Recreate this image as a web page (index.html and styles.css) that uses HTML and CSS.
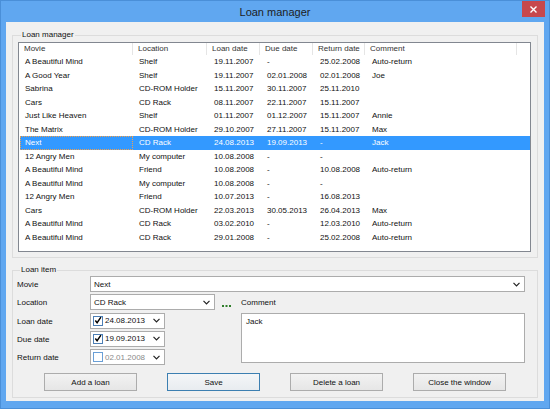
FILE: index.html
```html
<!DOCTYPE html>
<html lang="en">
<head>
  <meta charset="UTF-8">
  <title>Loan manager</title>
  <link rel="stylesheet" href="styles.css">
</head>
<body>
  <div class="window">
    <!-- Title bar -->
    <div class="titlebar">
      <span></span>
      <span class="title">Loan manager</span>
      <button class="close" title="Close">
        <svg width="7" height="7" viewBox="0 0 7 7"><path d="M0.5 0.5 L6.5 6.5 M6.5 0.5 L0.5 6.5" stroke="#fff" stroke-width="1.4"/></svg>
      </button>
    </div>

    <div class="client">
      <!-- Loan list -->
      <div class="group group-list">
        <div class="group-title">Loan manager</div>
        <div class="listview">
          <div class="lv-row lv-head">
            <span>Movie</span>
            <span>Location</span>
            <span>Loan date</span>
            <span>Due date</span>
            <span>Return date</span>
            <span>Comment</span>
            <span></span>
          </div>
          <div class="lv-row"><span>A Beautiful Mind</span><span>Shelf</span><span class="date">19.11.2007</span><span class="date">-</span><span class="date">25.02.2008</span><span class="cmt">Auto-return</span></div>
          <div class="lv-row"><span>A Good Year</span><span>Shelf</span><span class="date">19.11.2007</span><span class="date">02.01.2008</span><span class="date">02.01.2008</span><span class="cmt">Joe</span></div>
          <div class="lv-row"><span>Sabrina</span><span>CD-ROM Holder</span><span class="date">15.11.2007</span><span class="date">30.11.2007</span><span class="date">25.11.2010</span><span class="cmt"></span></div>
          <div class="lv-row"><span>Cars</span><span>CD Rack</span><span class="date">08.11.2007</span><span class="date">22.11.2007</span><span class="date">15.11.2007</span><span class="cmt"></span></div>
          <div class="lv-row"><span>Just Like Heaven</span><span>Shelf</span><span class="date">01.11.2007</span><span class="date">01.12.2007</span><span class="date">15.11.2007</span><span class="cmt">Annie</span></div>
          <div class="lv-row"><span>The Matrix</span><span>CD-ROM Holder</span><span class="date">29.10.2007</span><span class="date">27.11.2007</span><span class="date">15.11.2007</span><span class="cmt">Max</span></div>
          <div class="lv-row selected"><span class="focus">Next</span><span>CD Rack</span><span class="date">24.08.2013</span><span class="date">19.09.2013</span><span class="date">-</span><span class="cmt">Jack</span></div>
          <div class="lv-row"><span>12 Angry Men</span><span>My computer</span><span class="date">10.08.2008</span><span class="date">-</span><span class="date">-</span><span class="cmt"></span></div>
          <div class="lv-row"><span>A Beautiful Mind</span><span>Friend</span><span class="date">10.08.2008</span><span class="date">-</span><span class="date">10.08.2008</span><span class="cmt">Auto-return</span></div>
          <div class="lv-row"><span>A Beautiful Mind</span><span>My computer</span><span class="date">10.08.2008</span><span class="date">-</span><span class="date">-</span><span class="cmt"></span></div>
          <div class="lv-row"><span>12 Angry Men</span><span>Friend</span><span class="date">10.07.2013</span><span class="date">-</span><span class="date">16.08.2013</span><span class="cmt"></span></div>
          <div class="lv-row"><span>Cars</span><span>CD-ROM Holder</span><span class="date">22.03.2013</span><span class="date">30.05.2013</span><span class="date">26.04.2013</span><span class="cmt">Max</span></div>
          <div class="lv-row"><span>A Beautiful Mind</span><span>CD Rack</span><span class="date">03.02.2010</span><span class="date">-</span><span class="date">12.03.2010</span><span class="cmt">Auto-return</span></div>
          <div class="lv-row"><span>A Beautiful Mind</span><span>CD Rack</span><span class="date">29.01.2008</span><span class="date">-</span><span class="date">25.02.2008</span><span class="cmt">Auto-return</span></div>
        </div>
      </div>

      <!-- Loan item editor -->
      <div class="group group-item">
        <div class="group-title">Loan item</div>
        <div class="form">
          <label class="lbl">Movie</label>
          <div class="combo wide">
            <span>Next</span>
            <svg class="arrow" width="7" height="5" viewBox="0 0 7 5"><path d="M0.5 0.8 L3.5 3.8 L6.5 0.8" fill="none" stroke="#222" stroke-width="1.2"/></svg>
          </div>

          <label class="lbl">Location</label>
          <div class="combo">
            <span>CD Rack</span>
            <svg class="arrow" width="7" height="5" viewBox="0 0 7 5"><path d="M0.5 0.8 L3.5 3.8 L6.5 0.8" fill="none" stroke="#222" stroke-width="1.2"/></svg>
          </div>
          <div class="more">
            <svg width="9" height="2" viewBox="0 0 9 2"><rect x="0" y="0" width="2" height="2" fill="#2f7d2a"/><rect x="3.5" y="0" width="2" height="2" fill="#2f7d2a"/><rect x="7" y="0" width="2" height="2" fill="#2f7d2a"/></svg>
          </div>
          <label class="lbl comment-lbl">Comment</label>

          <label class="lbl">Loan date</label>
          <div class="datepick">
            <span class="check on"><svg width="9" height="9" viewBox="0 0 9 9"><path d="M1.5 4.5 L3.5 7 L7.8 0.8" fill="none" stroke="#000" stroke-width="1.6"/></svg></span>
            <span class="dtext">24.08.2013</span>
            <svg class="arrow" width="7" height="5" viewBox="0 0 7 5"><path d="M0.5 0.8 L3.5 3.8 L6.5 0.8" fill="none" stroke="#222" stroke-width="1.2"/></svg>
          </div>
          <div class="comment">Jack</div>

          <label class="lbl">Due date</label>
          <div class="datepick">
            <span class="check on"><svg width="9" height="9" viewBox="0 0 9 9"><path d="M1.5 4.5 L3.5 7 L7.8 0.8" fill="none" stroke="#000" stroke-width="1.6"/></svg></span>
            <span class="dtext">19.09.2013</span>
            <svg class="arrow" width="7" height="5" viewBox="0 0 7 5"><path d="M0.5 0.8 L3.5 3.8 L6.5 0.8" fill="none" stroke="#222" stroke-width="1.2"/></svg>
          </div>

          <label class="lbl">Return date</label>
          <div class="datepick">
            <span class="check"></span>
            <span class="dtext off">02.01.2008</span>
            <svg class="arrow" width="7" height="5" viewBox="0 0 7 5"><path d="M0.5 0.8 L3.5 3.8 L6.5 0.8" fill="none" stroke="#222" stroke-width="1.2"/></svg>
          </div>
        </div>

        <div class="buttons">
          <button>Add a loan</button>
          <button class="default">Save</button>
          <button>Delete a loan</button>
          <button>Close the window</button>
        </div>
      </div>
    </div>
  </div>
</body>
</html>
```

FILE: styles.css
```css
/* General */
body {
  margin: 0;
  font-family: "Liberation Sans", Arial, sans-serif;
  font-size: 8px;
  color: #111;
}

/* Window frame */
.window {
  width: 550px;
  height: 409px;
  box-sizing: border-box;
  border: 1px solid #4a8fd8;
  background-color: #60a7f0;
  padding: 0 5px 7px 5px;
  display: flex;
  flex-direction: column;
}

.titlebar {
  height: 21px;
  display: grid;
  grid-template-columns: 1fr auto 1fr;
  align-items: center;
}

.title {
  font-size: 11px;
  color: #1d1d1d;
  padding-top: 1px;
}

.close {
  justify-self: end;
  align-self: start;
  margin-right: -1px;
  width: 23px;
  height: 16px;
  border: none;
  padding: 0;
  background-color: #c7484d;
  display: flex;
  align-items: center;
  justify-content: center;
}

/* Client area */
.client {
  flex: 1;
  background-color: #f0f0f0;
  padding: 13px 6px 0 6px;
  display: flex;
  flex-direction: column;
}

/* Group boxes */
.group {
  border: 1px solid #dcdcdc;
  display: flex;
  flex-direction: column;
}

.group-title {
  width: fit-content;
  margin: -7px 0 0 3px;
  padding: 0 1px;
  line-height: 12px;
  height: 12px;
  background-color: #f0f0f0;
}

.group-list {
  padding: 0 6px 5px 5px;
}

.group-item {
  margin-top: 12px;
  padding: 0 12px 6px 4px;
}

/* List view */
.listview {
  margin-top: 1px;
  height: 210px;
  box-sizing: border-box;
  border: 1px solid #828790;
  background-color: #fff;
  overflow: hidden;
}

.lv-row {
  display: grid;
  grid-template-columns: 114px 74px 53px 53px 52px 152px 13px;
  height: 13.5px;
  line-height: 13.5px;
  white-space: nowrap;
}

.lv-row span {
  padding-left: 6px;
  overflow: hidden;
}

.lv-row span.date {
  padding-left: 7px;
}

.lv-row span.cmt {
  padding-left: 7px;
}

.lv-head {
  height: 12.25px;
  line-height: 12.25px;
  color: #333;
}

.lv-head span {
  padding-left: 5px;
  border-right: 1px solid #e5e5e5;
}

.lv-head span:last-child {
  border-right: none;
}

.lv-row.selected {
  background-color: #3399ff;
  color: #fff;
  margin-left: 1px;
  grid-template-columns: 113px 74px 53px 53px 52px 152px 13px;
}

.lv-row.selected span.focus {
  padding-left: 5px;
  outline: 1px dotted #f3a04a;
  outline-offset: -1px;
}

/* Loan item form */
.form {
  display: grid;
  grid-template-columns: 73px 125px 26px 1fr;
  grid-auto-rows: 16px;
  row-gap: 2.25px;
}

.lbl {
  grid-column: 1;
  align-self: center;
  padding-top: 1px;
}

.combo,
.datepick {
  grid-column: 2;
  box-sizing: border-box;
  border: 1px solid #acacac;
  background-color: #fff;
  display: flex;
  align-items: center;
  padding: 0 4px 0 3px;
}

.combo span {
  flex: 1;
}

.combo.wide {
  grid-column: 2 / 5;
}

.arrow {
  display: block;
}

.more {
  grid-column: 3;
  display: flex;
  align-items: flex-end;
  padding: 0 0 3px 7px;
}

.lbl.comment-lbl {
  grid-column: 4;
}

.datepick {
  width: 75px;
  padding-left: 2px;
}

.check {
  width: 10px;
  height: 10px;
  box-sizing: border-box;
  border: 1px solid #6a9fd6;
  background-color: #fff;
  display: flex;
  align-items: center;
  justify-content: center;
}

.check.on {
  border-color: #4d7fb5;
}

.dtext {
  flex: 1;
  padding-left: 2px;
}

.dtext.off {
  color: #8a8a8a;
}

.comment {
  grid-column: 4;
  grid-row: 3 / 6;
  height: 50px;
  box-sizing: border-box;
  border: 1px solid #acacac;
  background-color: #fff;
  padding: 3px 4px;
}

/* Buttons */
.buttons {
  margin-top: 8px;
  padding-left: 27px;
  display: flex;
  gap: 30px;
}

.buttons button {
  width: 93px;
  height: 18px;
  font-family: inherit;
  font-size: 8px;
  color: #111;
  border: 1px solid #acacac;
  background: linear-gradient(#f2f2f2, #e6e6e6);
  padding: 0;
}

.buttons button.default {
  border-color: #3c7fb1;
  background: linear-gradient(#f4f6f8, #e8ecf0);
}
```
